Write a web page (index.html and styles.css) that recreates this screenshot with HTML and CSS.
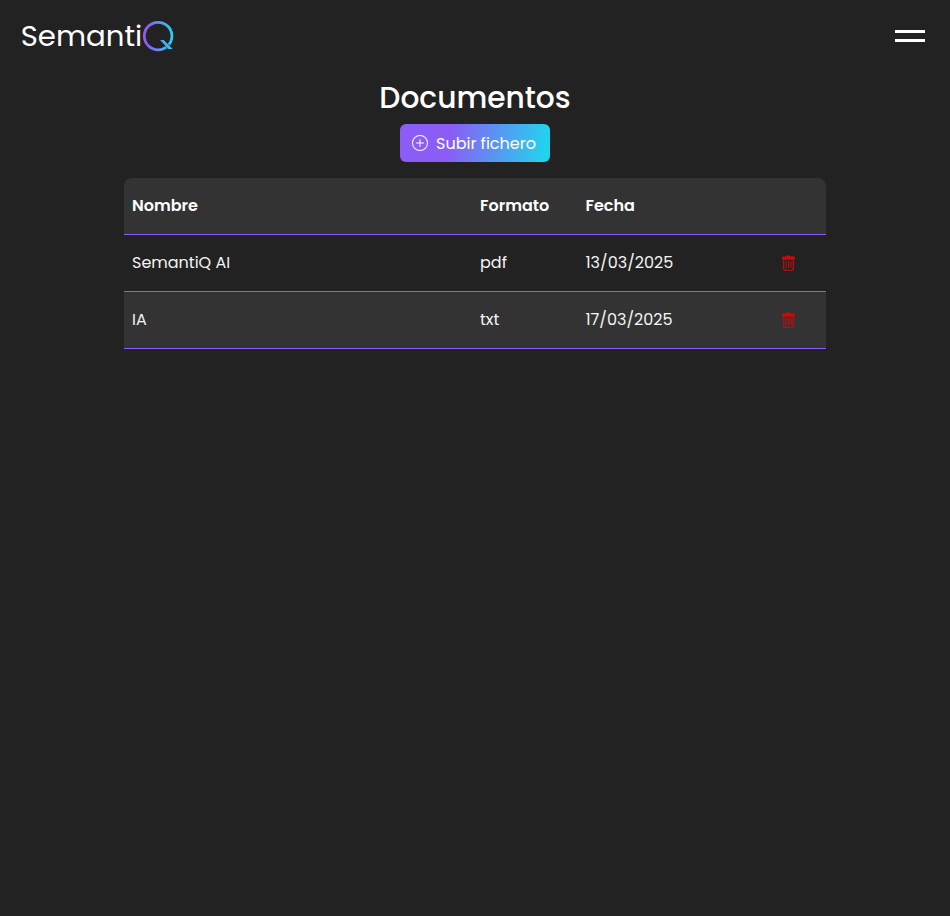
FILE: index.html
```html
<!DOCTYPE html>
<html lang="es">
<head>
<meta charset="utf-8">
<title>SemantiQ</title>
<link rel="stylesheet" href="styles.css">
</head>
<body>
<header class="topbar">
  <a class="logo"><span class="logo-text">Semanti</span><svg class="logo-q" width="32" height="32" viewBox="0 0 32 32" fill="none" role="img" aria-label="Q">
    <defs><linearGradient id="brand" gradientUnits="userSpaceOnUse" x1="1" y1="0" x2="31" y2="0"><stop offset=".15" stop-color="#8b5cf6"/><stop offset="1" stop-color="#22d3ee"/></linearGradient></defs>
    <circle cx="16.1" cy="16.1" r="13.8" stroke="url(#brand)" stroke-width="2.8"/>
    <path d="M18 20h3.800l8.800 9h-4.200z" fill="url(#brand)" stroke="#222" stroke-width="1" paint-order="stroke"/>
  </svg></a>
  <button class="menu" aria-label="Menú"><span></span><span></span></button>
</header>
<main>
  <h1>Documentos</h1>
  <button class="upload">
    <svg width="16" height="16" viewBox="0 0 16 16" fill="currentColor"><path d="M8 15A7 7 0 1 1 8 1a7 7 0 0 1 0 14m0 1A8 8 0 1 0 8 0a8 8 0 0 0 0 16"/><path d="M8 4a.5.5 0 0 1 .5.5v3h3a.5.5 0 0 1 0 1h-3v3a.5.5 0 0 1-1 0v-3h-3a.5.5 0 0 1 0-1h3v-3A.5.5 0 0 1 8 4"/></svg>
    <span>Subir fichero</span>
  </button>
  <table>
    <thead><tr><th class="name">Nombre</th><th class="format">Formato</th><th class="date">Fecha</th><th class="action"></th></tr></thead>
    <tbody>
      <tr><td>SemantiQ AI</td><td>pdf</td><td>13/03/2025</td><td class="action"><svg class="trash" width="16" height="16" viewBox="0 0 16 16"><use href="#trash"/></svg></td></tr>
      <tr><td>IA</td><td>txt</td><td>17/03/2025</td><td class="action"><svg class="trash" width="16" height="16" viewBox="0 0 16 16"><use href="#trash"/></svg></td></tr>
    </tbody>
  </table>
</main>
<svg class="symbols" width="0" height="0"><symbol id="trash" viewBox="0 0 16 16"><g transform="translate(-.5 .5)"><path d="M2 1.500h12v2.500H2z" fill="#b81010"/><path d="M5.100 5.500h.8v7h-.8zM7.600 5.500h.8v7h-.8zM10.100 5.500h.8v7h-.8z"/><path d="M3.200 4v9.200a1.500 1.500 0 0 0 1.500 1.500h6.600a1.500 1.500 0 0 0 1.500-1.500V4" fill="none" stroke="#d40808" stroke-width="1.100"/><path d="M14.500 3a1 1 0 0 1-1 1h-11a1 1 0 0 1-1-1V2a1 1 0 0 1 1-1H6a1 1 0 0 1 1-1h2a1 1 0 0 1 1 1h3.500a1 1 0 0 1 1 1zM2.500 3h11V2h-11z" fill="#d80707"/></g></symbol></svg>
</body>
</html>
```
FILE: styles.css
```css
* { box-sizing: border-box; }
body { margin: 0; min-height: 100vh; background: #222; color: #fff; font: 16px/24px Poppins, Inter, sans-serif; }
button { border: 0; padding: 0; background: none; color: inherit; font: inherit; }
svg { display: block; }
.topbar { height: 72px; padding: 0 25px 0 20px; display: flex; align-items: center; justify-content: space-between; }
.logo { display: flex; align-items: center; }
.logo-text { width: 122px; font-size: 29.2px; line-height: 40px; padding-left: .7px; white-space: nowrap; }
.menu { display: flex; flex-direction: column; gap: 6px; }
.menu span { width: 30px; height: 3px; background: #fff; }
main { display: flex; flex-direction: column; align-items: center; }
h1 { margin: 7px 0 7px; height: 38px; font-size: 29.7px; line-height: 38px; font-weight: 500; }
.upload { width: 150px; height: 38px; padding: 0 12px; display: flex; align-items: center; gap: 8px; border-radius: 6px; background: linear-gradient(100deg, #8b5cf6 33%, #22d3ee 96%); white-space: nowrap; }
.upload span { padding-top: 2px; }
table { width: 702px; margin-top: 16px; table-layout: fixed; border-collapse: separate; border-spacing: 0; }
th, td { height: 57px; padding: 0 8px; text-align: left; border-bottom: 1px solid #8b5cf6; white-space: nowrap; }
th { background: #333; font-weight: 600; }
th:first-child { border-top-left-radius: 8px; }
th:last-child { border-top-right-radius: 8px; }
td { color: #f4f4f4; }
tbody tr:nth-child(even) td { background: #333; }
.name { width: 348px; }
.format { width: 105.5px; }
.date { width: 173.5px; }
.action { width: 75px; }
.trash { margin: 0 auto; fill: red; }
.symbols { position: absolute; }
```
